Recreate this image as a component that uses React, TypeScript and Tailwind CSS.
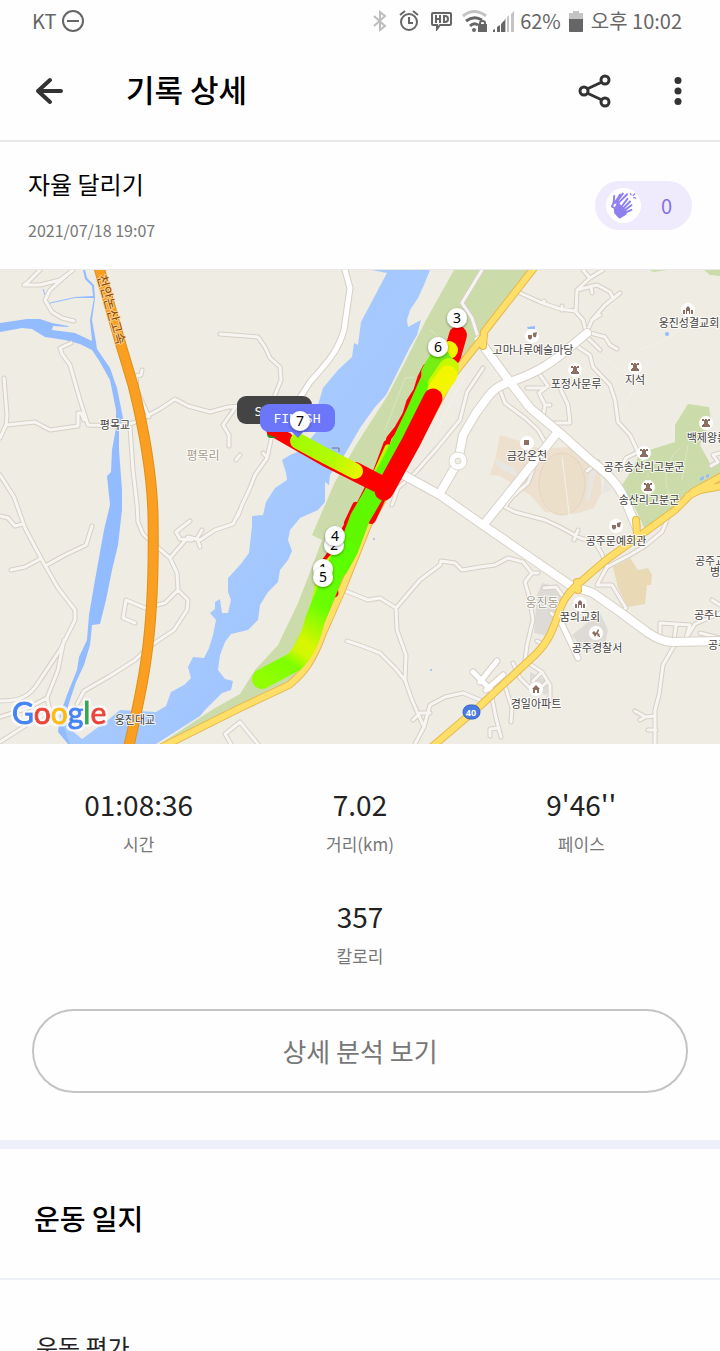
import type { ReactNode } from "react";

const UI_FONT = "font-['Noto_Sans_CJK_KR','Noto_Sans',sans-serif]";

const stats = [
  { label: "시간", value: "01:08:36" },
  { label: "거리(km)", value: "7.02" },
  { label: "페이스", value: "9'46''" },
];

// ── Map data ──
const minorRoads = [
  "M40 0L28 12L24 15L40 15L60 10L73 0",
  "M68 4L50 20L45 30L52 42L62 48L74 51",
  "M71 73L60 78L62 84L70 95L80 130L88 155L117 156L133 153L147 146L160 139L175 129L188 136L210 142L228 137L240 136",
  "M4 108L7 145L6 155L35 152L50 160L78 156L78 143L81 143L84 150",
  "M6 155L0 168",
  "M0 205L14 227L25 258L42 290L58 318L75 340L75 350L60 380L40 410C30 427 20 431 0 431",
  "M130 157L133 200L137 235L138 252L143 264L155 275L170 288L177 303L178 320L188 330L187 340L174 360L150 376L135 390L110 406L84 421L77 434",
  "M149 147L137 120L136 106L141 105L142 100",
  "M235 138L223 155L229 165L229 176",
  "M220 64L258 67L265 77L270 88L280 97L281 110L275 125",
  "M0 246L8 248L15 256L23 254",
  "M11 300L25 297L40 289",
  "M47 295L65 285L86 275L92 256",
  "M64 370L58 400L47 428L28 438L0 447",
  "M47 428L50 441L28 454L0 472",
  "M178 320L165 333L145 338L126 330L123 348L135 353",
  "M170 288L188 267L200 270L215 260L233 254L240 240",
  "M190 251L176 262L180 269L192 270",
  "M202 260L197 268L200 277",
  "M240 452L225 464L231 474",
  "M240 452L248 462L258 474",
  "M272 165L267 188L255 205L250 218L242 235L238 246",
  "M482 0L462 33L472 48L479 70",
  "M483 98L467 122L460 150L437 178L415 203L398 218L392 235",
  "M520 23L540 32L560 39L575 41L583 50L586 62",
  "M576 41L577 20L590 8L603 0",
  "M577 20L597 15L610 22L613 28",
  "M620 23L605 35L592 50L587 62L605 67L610 75L617 79",
  "M583 0L590 8",
  "M592 50L600 45M592 23L591 16M545 34L544 31M562 40L562 36",
  "M588 68L600 80",
  "M578 77L590 85L593 97L610 115L615 130L618 152L630 165L638 182L626 188L620 200",
  "M540 105L548 116L539 123L545 135L543 147",
  "M560 118L568 135L570 153L550 153L538 147",
  "M545 118L527 118M545 135L550 135",
  "M500 120L505 133L525 148L538 160L545 172",
  "M533 200L528 213L513 226L506 235",
  "M587 201L598 192",
  "M720 183L713 185L718 192L711 196",
  "M343 320L368 330L380 328L396 338L420 310L440 295L441 291L455 293L462 300L480 297L495 295L508 288L523 292L532 303L538 303",
  "M532 303L525 312L530 330L533 350L527 375L525 390",
  "M396 338L397 360L406 385L405 410L412 430L424 457L415 474",
  "M347 371L362 376L380 383L395 398L404 409",
  "M424 457L430 435L445 427L463 423L480 430",
  "M413 450L420 443L430 443",
  "M503 236L515 242L545 250L560 257L580 268L595 272L602 284L607 297",
  "M574 270L578 260",
  "M607 297L597 315L612 315L626 338L620 344",
  "M607 297L630 285L645 276L662 262L667 250",
  "M674 376L663 395L659 425L655 440L655 474",
  "M655 446L645 447L635 441L645 447L640 450",
  "M656 460L648 460",
  "M660 366L660 353L690 355L686 368",
  "M674 370L676 356M685 370L695 354L720 343M700 363L720 368M712 330L720 335",
  "M513 393L520 408L532 420",
  "M528 393L542 402L550 415L550 432",
  "M505 416L512 438L511 452",
  "M492 428L496 448L501 467M498 458L490 459L490 466",
  "M544 318L556 317L562 325M551 343L556 347M537 371L543 374",
  "M533 411L541 403M538 420L547 412",
  "M240 185L236 190M263 183L267 187",
];

const mainRoads = [
  "M400 203L440 225L480 253L570 315L593 323L620 342L647 362C656 368 662 371 672 372L720 371",
  "M479 70L510 112L530 138L560 163L590 190C605 202 618 212 626 232L636 256",
  "M587 63L563 83C545 98 530 105 510 112C490 118 488 128 476 143L463 165L458 192",
  "M458 192L440 223",
  "M557 163L530 197L485 253",
];

const sideRoads = [
  "M345 0L350 18L344 60C338 82 325 95 310 112L292 140",
  "M560 350L578 388",
  "M473 402L492 421M480 412L497 391M486 420L503 405",
];

const yellowRoads = [
  "M534 -2L484 62L483 76",
  "M484 66L452 106L420 165L368 255L342 320L323 363C313 390 305 402 289 415L240 438L160 478",
  "M722 206L693 222L675 240L645 262L606 290L577 315C566 325 562 333 558 345C552 362 548 372 536 384L480 436L433 476",
  "M636 250L637 264M577 312L578 320",
  "M722 216L700 220L688 226",
];

const places = [
  { x: 689, y: 57, name: "웅진성결교회", icon: "church", ix: 688, iy: 40 },
  { x: 533, y: 84, name: "고마나루예술마당", icon: "art", ix: 532, iy: 66 },
  { x: 576, y: 118, name: "포정사문루", icon: "tower", ix: 575, iy: 100 },
  { x: 635, y: 114, name: "지석", icon: "tower", ix: 635, iy: 97 },
  { x: 712, y: 172, name: "백제왕릉원", icon: "tower", ix: 706, iy: 153 },
  { x: 527, y: 190, name: "금강온천", icon: "square", ix: 527, iy: 173 },
  { x: 644, y: 201, name: "공주송산리고분군", icon: "tower", ix: 644, iy: 183 },
  { x: 649, y: 234, name: "송산리고분군", icon: "tower", ix: 648, iy: 217 },
  { x: 616, y: 275, name: "공주문예회관", icon: "art", ix: 616, iy: 256 },
  { x: 580, y: 351, name: "꿈의교회", icon: "church", ix: 580, iy: 334 },
  { x: 597, y: 382, name: "공주경찰서", icon: "police", ix: 596, iy: 363 },
  { x: 536, y: 438, name: "경일아파트", icon: "home", ix: 536, iy: 419 },
];

const placeIcons: Record<string, ReactNode> = {
  church: <path d="M-5 4V0h2v4zM-2 4V-2L0-4L2-2V4H1V1H-1V4zM3 4V0h2v4z" />,
  art: <path d="M-4-1H0V2Q-2 5-4 2zM1-3L5-4L4 1Q2 2 1 0z" />,
  tower: <path d="M-4-4h2v1h1v-1h2v1h1v-1h2V-2H2V1H3V2H4V4H-4V2H-3V1H-2V-2H-4z" />,
  square: <path d="M-3-3h5v5h-5z" />,
  police: <path d="M-4 0L-2-2L0 0L2-4L3-3L2 0L4 2L2 4L1 1L-1 4L-2 2zM3 3h1v1H3z" />,
  home: <path d="M-4 0L0-4L4 0H3V4H1V1H-1V4H-3V0z" />,
};

const kmPins = [
  { x: 323, y: 299, km: 1 },
  { x: 334, y: 275, km: 2 },
  { x: 457, y: 48, km: 3 },
  { x: 335, y: 266, km: 4 },
  { x: 323, y: 307, km: 5 },
  { x: 438, y: 77, km: 6 },
  { x: 300, y: 151, km: 7 },
];

function Roads({ paths, width, fill, casing }: { paths: string[]; width: number; fill: string; casing: string }) {
  const d = paths.join("");
  return (
    <g fill="none" strokeLinecap="round" strokeLinejoin="round">
      <path d={d} stroke={casing} strokeWidth={width + 2} />
      <path d={d} stroke={fill} strokeWidth={width} />
    </g>
  );
}

function RouteMap() {
  return (
    <svg viewBox="0 0 720 474" className="block w-full" role="img" aria-label="달리기 경로 지도">
      <defs>
        <linearGradient id="river" x1="0" y1="0" x2="1" y2="1">
          <stop offset="0" stopColor="#9fc3ff" />
          <stop offset="0.5" stopColor="#a6c9ff" />
          <stop offset="1" stopColor="#98bdff" />
        </linearGradient>
        <linearGradient id="arm" gradientUnits="userSpaceOnUse" x1="298" y1="169" x2="357" y2="202">
          <stop offset="0" stopColor="#a4fc00" />
          <stop offset="0.6" stopColor="#b4fa00" />
          <stop offset="1" stopColor="#e4f600" />
        </linearGradient>
        <linearGradient id="tail" gradientUnits="userSpaceOnUse" x1="340" y1="290" x2="262" y2="409">
          <stop offset="0" stopColor="#5bff00" />
          <stop offset="0.35" stopColor="#6cff00" />
          <stop offset="0.62" stopColor="#d8f600" />
          <stop offset="0.7" stopColor="#d0f800" />
          <stop offset="0.8" stopColor="#7dff00" />
          <stop offset="1" stopColor="#92ff00" />
        </linearGradient>
        <filter id="pinShadow" x="-40%" y="-40%" width="180%" height="180%">
          <feDropShadow dx="0" dy="1" stdDeviation="1.5" floodOpacity="0.45" />
        </filter>
        <filter id="logoHalo" x="-10%" y="-20%" width="120%" height="140%">
          <feMorphology in="SourceAlpha" operator="dilate" radius="2" result="spread" />
          <feFlood floodColor="#fff" floodOpacity="0.75" />
          <feComposite in2="spread" operator="in" result="halo" />
          <feMerge>
            <feMergeNode in="halo" />
            <feMergeNode in="SourceGraphic" />
          </feMerge>
        </filter>
      </defs>

      <rect width="720" height="474" fill="#efece4" />

      {/* Parks and blocks */}
      <g fill="#cbdcaa">
        <path d="M454 0H533L484 63L478 75L440 125L375 245L340 320L315 370L290 413L240 436L160 474L215 438L240 424L255 400L278 375L298 333L312 297L322 270L312 265L325 235L335 212L356 175L388 125L405 92L425 52L440 25Z" />
        <path d="M688 134L709 137L711 150L700 175L712 197L720 192V205L690 222L660 248L645 260L636 240L622 215L632 200L640 183L675 172V155Z" />
        <path d="M649 0H667L654 2ZM704 0H720V6L710 5Z" />
      </g>
      <g fill="#eee0cf">
        <path d="M500 165L520 171L538 178L575 177L600 200L602 222L594 238L575 244L545 242L530 225L500 206L490 205L495 190Z" />
        <ellipse cx="562" cy="214" rx="23" ry="31" fill="#ecdfc9" stroke="#e4d5bf" />
        <path d="M613 297L630 288L638 300L648 298L652 305L651 315L647 315L645 334L628 337L618 318Z" fill="#e9dab5" />
      </g>
      <path d="M542 313L560 318L563 325L548 366L534 363L537 325ZM572 365L600 343L608 360L605 376L585 382ZM530 402L545 410L550 420L545 425L530 415Z" fill="#dedbd6" />
      <path d="M496 189L514 198L518 208L497 196ZM590 200L596 200L589 232L586 230ZM605 207L612 220L602 224Z" fill="#e8e6e2" />
      <path d="M562 187L570 250M465 105L435 165M600 85L620 100L640 110L620 140M640 80L660 72L690 55" fill="none" stroke="#f3f2ea" />
      <path d="M430 60L440 67M415 107L405 108L385 160M675 235C660 215 665 190 680 178M688 175L682 210" fill="none" stroke="#dae5c4" />

      {/* Water */}
      <path
        fill="#93bbff"
        d="M0 53L27 49L40 49L52 53L68 56L69 57L53 56L52 60L60 61L75 63L92 71L90 50L94 28L75 28L48 34V33L75 27L93 26L92 16L85 9L83 0H85L87 8L94 15L95 28L92 50L96 72L97 79L110 98L117 118L121 138L123 148L119 160V180L122 220V240L118 275L112 300L106 330L100 354L92 355L90 375L84 395L76 412L70 430L64 450L72 464L82 474H68L58 462L60 445L67 425L77 400L79 387L87 370L89 345L95 310L104 260L110 235L107 206L111 202L112 180L116 158V140L110 110L100 92L92 80L80 74L65 70L45 67L32 59L22 58L0 62Z"
      />
      <path
        fill="url(#river)"
        d="M372 0H430L424 15L418 28L410 40L407 50L408 57L421 50L417 65L410 77L400 97L386 125L375 137L360 158L345 184L330 205L329 215L325 212V232L318 240L300 248L290 260L288 270L292 281L288 290L280 300L278 312L268 322L260 335L258 350L248 360L231 364L225 372L220 385L218 400L225 409L233 411L231 420L222 423L205 440L200 446L156 474H70L62 452L82 469L108 450L120 440L156 442L166 436L171 422L184 415L191 408L188 397L193 387L204 388L209 378L213 365L216 350L210 343L215 339L215 332L220 329L222 343L228 343L231 330L228 322L228 308L240 295L249 283L252 256L252 246L263 245L266 232L275 218L287 210L286 203L282 190L290 185L300 181L318 160L318 135L323 118L338 100L352 87L354 73L358 75L361 52L370 35L380 16L387 3Z"
      />
      <path d="M43 19L45 25" stroke="#93bbff" />
      <g fill="#93bbff">
        <path d="M527 57L535 56V59H528Z" />
        <circle cx="667" cy="64" r="2" />
        <path d="M700 208l4-2v3l-4 2zM706 205l3-1v3l-3 1z" />
        <circle cx="431" cy="400" r="1" />
        <circle cx="374" cy="269" r="1" />
      </g>

      <Roads paths={minorRoads} width={3} fill="#f7f5f2" casing="#d6cfc5" />
      <Roads paths={sideRoads} width={5} fill="#ffffff" casing="#d6cfc5" />
      <Roads paths={mainRoads} width={8} fill="#ffffff" casing="#d8d1c7" />
      <circle cx="458" cy="191" r="9" fill="#fff" stroke="#ddd7cd" />
      <circle cx="458" cy="191" r="3" fill="#efece4" stroke="#ddd7cd" />
      <Roads paths={yellowRoads} width={6} fill="#ffdf67" casing="#e5b952" />
      <Roads
        paths={["M98 -6L121 75L133 115C143 155 152 205 153 245C154 300 152 350 146 390C142 420 136 445 128 480"]}
        width={9}
        fill="#fb9f22"
        casing="#dd9214"
      />

      {/* Running track, coloured by pace */}
      <g fill="none" strokeLinecap="round" strokeLinejoin="round">
        <path d="M433 91L425 97L420 107L416 120L409 131L405 144L397 158L389 168L386 178" stroke="#f00" strokeWidth="5" />
        <path d="M386 173L376 200L357 238L348 252L336 275L325 290" stroke="#f00" strokeWidth="5" />
        <path d="M356 236L348 253" stroke="#f00" strokeWidth="8" />
        <path d="M384 221L371 249" stroke="#f00" strokeWidth="10" />
        <path d="M332 317L334 323" stroke="#f00" strokeWidth="9" />
        <path d="M458 65L452 86" stroke="#f00" strokeWidth="18" />
        <circle cx="449" cy="80" r="9" fill="#f2f500" />
        <path d="M388 178L368 222L348 270L322 300L311 350L293 385" stroke="#b8fb00" strokeWidth="7" />
        <path d="M444 94L437 96L427 118L416 143L402 172L390 196L374 224L360 248L348 280L338 298" stroke="#60f800" strokeWidth="20" />
        <path d="M440 90L432 103" stroke="#76ee14" strokeWidth="22" />
        <path d="M449 98L438 114" stroke="#c8f800" strokeWidth="20" />
        <path d="M448 105L437 120" stroke="#f4f600" strokeWidth="19" />
        <path d="M346 280L335 300L326 323L315 350C310 370 305 382 294 392L262 409" stroke="url(#tail)" strokeWidth="20" />
        <path d="M433 128L411 172L384 221" stroke="#f00" strokeWidth="19" />
        <path d="M276 163L325 191L375 216" stroke="#f00" strokeWidth="11" />
        <path d="M355 201L380 214" stroke="#f00" strokeWidth="18" />
        <path d="M271 164h5" stroke="#2c8f1d" strokeWidth="8" />
        <path d="M271 161L288 167" stroke="#f00" strokeWidth="9" />
        <path d="M298 171L320 183L355 201" stroke="url(#arm)" strokeWidth="16" />
      </g>
      <path d="M332 178h7v4" fill="none" stroke="#777" />

      {/* Place names */}
      <g
        className="font-['Noto_Sans_CJK_KR',sans-serif] text-[11px]"
        fill="#44403c"
        stroke="#fff"
        strokeOpacity="0.85"
        strokeWidth="2"
        strokeLinejoin="round"
        paintOrder="stroke"
        textAnchor="middle"
      >
        {places.map((p) => (
          <text key={p.name} x={p.x} y={p.y}>{p.name}</text>
        ))}
        <text x="115" y="159">평목교</text>
        <text x="135" y="454">웅진대교</text>
        <text x="695" y="295" textAnchor="start">공주교대</text>
        <text x="710" y="306" textAnchor="start">병설</text>
        <text x="694" y="349" textAnchor="start">공주니</text>
        <text x="708" y="379" textAnchor="start">공주</text>
        <text x="203" y="190" fill="#a69c8c" className="text-[12px]">평목리</text>
        <text x="542" y="337" fill="#a69c8c" className="text-[12px]">웅진동</text>
        <text transform="translate(107 41) rotate(74)" fill="#8a4b06" stroke="#ffd9a0" className="text-[13px]">천안논산고속</text>
      </g>
      {places.map((p) => (
        <g key={p.name} transform={`translate(${p.ix} ${p.iy})`} fill="#8d6e63">
          <circle r="7" fill="#fff" />
          {placeIcons[p.icon]}
        </g>
      ))}

      <g>
        <rect x="463" y="435" width="17" height="14" rx="7" fill="#4a7be0" stroke="#3564c4" />
        <text x="471" y="446" textAnchor="middle" fill="#fff" className="font-['Open_Sans',sans-serif] text-[9px] font-bold">40</text>
      </g>

      <text x="12" y="454" strokeWidth="1" filter="url(#logoHalo)" className="font-[Lato,sans-serif] text-[30px]">
        <tspan fill="#4285f4" stroke="#4285f4">G</tspan>
        <tspan fill="#ea4335" stroke="#ea4335">o</tspan>
        <tspan fill="#fbbc05" stroke="#fbbc05">o</tspan>
        <tspan fill="#4285f4" stroke="#4285f4">g</tspan>
        <tspan fill="#34a853" stroke="#34a853">l</tspan>
        <tspan fill="#ea4335" stroke="#ea4335">e</tspan>
      </text>

      {/* Start / finish flags */}
      <g className="font-['DejaVu_Sans_Mono',monospace] text-[13px]" fill="#fff" textAnchor="middle">
        <rect x="237" y="126" width="75" height="28" rx="9" fill="#444" />
        <text x="274" y="146">START</text>
        <path d="M260 143a9 9 0 0 1 9-9h57a9 9 0 0 1 9 9v10a9 9 0 0 1-9 9h-23l-5 6l-6-6h-23a9 9 0 0 1-9-9z" fill="#6b76fb" />
        <text x="297" y="153">FINISH</text>
      </g>
      {kmPins.map((pin) => (
        <g key={pin.km} transform={`translate(${pin.x} ${pin.y})`}>
          <circle r="10" fill="#fff" filter="url(#pinShadow)" />
          <text y="5" textAnchor="middle" className="font-['Noto_Sans',sans-serif] text-[14px]">{pin.km}</text>
        </g>
      ))}
    </svg>
  );
}

function StatusBar() {
  return (
    <div className="flex h-[42px] items-center justify-between pr-[38px] pl-8 text-[20px] leading-6 text-[#666]">
      <div className="flex items-center gap-[5px]">
        <span>KT</span>
        <svg className="size-[22px]" viewBox="0 0 22 22" fill="none" stroke="currentColor" strokeWidth="2">
          <circle cx="11" cy="11" r="10" />
          <path d="M5 11h12" />
        </svg>
      </div>
      <div className="flex items-center">
        <svg className="mr-3 h-[22px] w-[14px]" viewBox="0 0 14 22" fill="none" stroke="#bdbdbd" strokeWidth="2">
          <path d="M1 6L12 16L7 20V2L12 6L1 16" />
        </svg>
        <svg className="mr-[10px] h-[22px] w-[21px]" viewBox="0 0 21 22" fill="none" stroke="currentColor" strokeWidth="2">
          <circle cx="10" cy="12" r="8" />
          <path d="M10 7v6h4M1 5L6 1M19 5L14 1" />
        </svg>
        <svg className="mr-[9px] h-[20px] w-[23px]" viewBox="0 0 23 20" fill="none" stroke="currentColor" strokeWidth="2">
          <path d="M3 2H20Q21 2 21 3V13Q21 14 20 14H10L7 18V14H3Q2 14 2 13V3Q2 2 3 2Z" />
          <path d="M6 4V12M10 4V12M6 8H10M14 5H15Q18 5 18 8Q18 11 15 11H14Z" />
        </svg>
        <svg className="mr-[5px] h-[23px] w-[26px]" viewBox="0 0 26 23" fill="none" stroke="currentColor" strokeWidth="3">
          <path d="M1 6Q12-3 24 6" stroke="#c4c4c4" />
          <path d="M4 11Q12 5 20 10M8 16Q12 12 16 15" />
          <circle cx="12" cy="20" r="2" fill="currentColor" stroke="none" />
          <path d="M16 14H25V22H16Z" fill="currentColor" stroke="none" />
          <path d="M18 14V13Q18 11 20.500 11Q23 11 23 13V14" strokeWidth="2" />
        </svg>
        <svg className="mr-[5px] h-[21px] w-[22px]" viewBox="0 0 22 21" fill="#666">
          <path d="M0 21V19L2 18V21ZM4 21V16L7 14V21ZM8 21V13L11 10V21Z" />
          <path d="M11 21V9L13 7V21ZM14 21V6L16 4V21ZM18 21V3L21 0V21Z" fill="#c4c4c4" />
          <path d="M9 21V12L12 9V21Z" />
        </svg>
        <span className="mr-2">62%</span>
        <svg className="mr-2 h-[23px] w-[14px]" viewBox="0 0 14 23">
          <path d="M0 3H4V1H10V3H14V9H0Z" fill="#c4c4c4" />
          <path d="M0 9H14V21Q14 22 13 22H1Q0 22 0 21Z" fill="#666" />
        </svg>
        <span>오후 10:02</span>
      </div>
    </div>
  );
}

function ClapIcon() {
  return (
    <svg className="size-[35px]" viewBox="63 53 106 106" fill="none" stroke="#8f80f0" strokeLinecap="round" strokeLinejoin="round">
      <path d="M88 77L86 98L81 109L91 115M90 98L106 73M96 94L114 70M104 95L127 72" strokeWidth="6" />
      <path d="M97 100L93 94L96 88L105 106Z" fill="#8f80f0" strokeWidth="5" />
      <path d="M108 112L128 86M112 118L136 94M116 123L140 105M120 128L140 119" strokeWidth="6" />
      <path d="M97 102L106 106L122 122L123 132L104 143L91 129L89 119Z" fill="#8f80f0" strokeWidth="5" />
      <path d="M137 70L139 74M150 71L145 76M147 82L153 84" strokeWidth="4" />
    </svg>
  );
}

function Stat({ label, value }: { label: string; value: string }) {
  return (
    <div className="flex flex-col items-center">
      <dt className="order-2 mt-2 text-[17px] leading-6 text-[#777]">{label}</dt>
      <dd className="text-[28px] leading-10 text-[#222]">{value}</dd>
    </div>
  );
}

export default function App() {
  return (
    <div className={`${UI_FONT} min-h-screen bg-[#fefefe] text-black`}>
      <StatusBar />

      <header className="flex h-[100px] items-center border-b-2 border-[#e8e8e8] pr-[26px] pl-[33px]">
        <button aria-label="뒤로" className="cursor-pointer">
          <svg className="size-8" viewBox="0 0 32 32" fill="none" stroke="#333" strokeWidth="4" strokeLinecap="round" strokeLinejoin="round">
            <path d="M28 16H5M17 5L5 16L17 27" />
          </svg>
        </button>
        <h1 className="ml-[61px] pb-1 text-[31px] leading-9 font-medium">기록 상세</h1>
        <button aria-label="공유" className="ml-auto cursor-pointer">
          <svg className="size-9" viewBox="0 0 36 36" fill="none" stroke="#333" strokeWidth="3">
            <circle cx="8" cy="18" r="4" />
            <circle cx="29" cy="7" r="4" />
            <circle cx="29" cy="29" r="4" />
            <path d="M11 16L26 9M11 20L26 27" />
          </svg>
        </button>
        <button aria-label="더보기" className="ml-[50px] cursor-pointer">
          <svg className="size-8" viewBox="0 0 64 64" fill="#333">
            <circle cx="32" cy="11" r="7" />
            <circle cx="32" cy="32" r="7" />
            <circle cx="32" cy="53" r="7" />
          </svg>
        </button>
      </header>

      <section className="flex h-32 items-center justify-between border-b border-[#e8e8e8] px-7">
        <div>
          <h2 className="pb-1 text-[24px] leading-7">자율 달리기</h2>
          <p className="mt-4 text-[16px] leading-6 text-[#777]">2021/07/18 19:07</p>
        </div>
        <button aria-label="박수 0" className="flex h-[49px] w-[97px] cursor-pointer items-center rounded-full bg-[#efebfd] pl-[11px]">
          <span className="rounded-full bg-white">
            <ClapIcon />
          </span>
          <span className="ml-5 text-[20px] leading-6 text-[#8371e6]">0</span>
        </button>
      </section>

      <RouteMap />

      <section className="px-7 pt-10 pb-[47px]">
        <dl className="grid grid-cols-3 gap-y-10">
          {stats.map((s) => (
            <Stat key={s.label} {...s} />
          ))}
          <div className="col-span-3">
            <Stat label="칼로리" value="357" />
          </div>
        </dl>
        <div className="mt-[41px] px-1">
          <button className="h-[84px] w-full cursor-pointer rounded-full border-2 border-[#c4c4c4] text-[26px] leading-8 text-[#777]">
            상세 분석 보기
          </button>
        </div>
      </section>

      <section className="border-t-9 border-[#edf0f8]">
        <h2 className="border-b-2 border-[#edf0f6] px-[34px] pt-[49px] pb-10 text-[28px] leading-10 font-medium">운동 일지</h2>
        <h3 className="px-9 pt-[51px] text-[24px] leading-8 text-[#222]">운동 평가</h3>
      </section>
    </div>
  );
}
